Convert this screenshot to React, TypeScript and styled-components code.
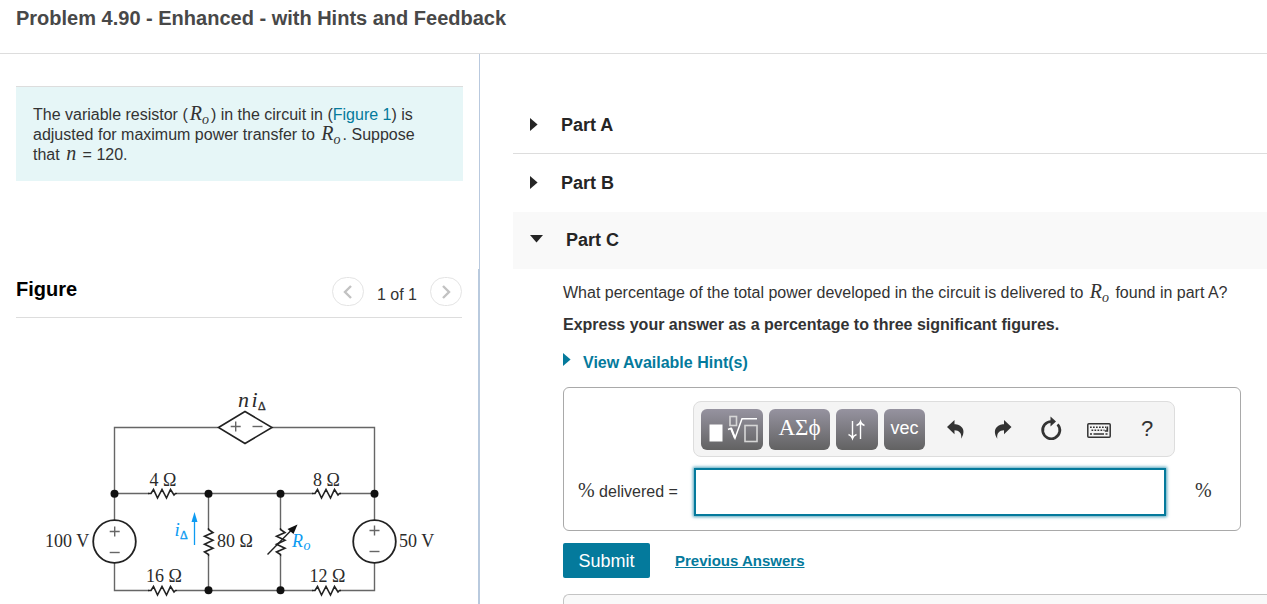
import React from "react";
import styled, { createGlobalStyle, css } from "styled-components";

const sans = `"Liberation Sans", Arial, sans-serif`;
const serif = `"Liberation Serif", "Times New Roman", serif`;
const teal = "#047a9c";

const GlobalStyle = createGlobalStyle`
  * { box-sizing: border-box; }
  body {
    margin: 0;
    background: #fff;
    color: #333;
    font: 16px/20px ${sans};
  }
  button, input { font: inherit; color: inherit; }
`;

const Page = styled.div`
  display: flex;
  flex-direction: column;
  height: 100vh;
  overflow: hidden;
`;

const Header = styled.header`
  flex: none;
  padding: 6px 16px 23px;
  border-bottom: 1px solid #ddd;
`;

const Title = styled.h1`
  margin: 0;
  font-size: 20px;
  line-height: 24px;
  color: #484848;
`;

const Columns = styled.div`
  display: flex;
  flex: 1;
  min-height: 0;
`;

const Sidebar = styled.aside`
  display: flex;
  flex-direction: column;
  flex: 0 0 480px;
`;

const IntroPane = styled.section`
  padding: 32px 16px 88px;
  border-right: 1px solid #b9c9de;
`;

const FigurePane = styled.section`
  flex: 1;
  min-height: 0;
  overflow: hidden;
  padding: 0 16px;
  border-right: 2px solid #b9cade;
`;

const Statement = styled.p`
  margin: 0;
  padding: 18px 32px 16px 17px;
  border-top: 1px solid #ddd;
  background: #e6f6f7;
`;

const Link = styled.a<{ $strong?: boolean }>`
  color: ${teal};
  text-decoration: none;
  ${({ $strong }) =>
    $strong &&
    css`
      font-size: 15px;
      font-weight: bold;
      text-decoration: underline;
    `}
`;

const Var = styled.i`
  margin: 0 2px;
  font-family: ${serif};
  font-size: 20px;
  line-height: 0;
`;

const Sub = styled.sub`
  font-size: 14px;
  line-height: 0;
  vertical-align: -4px;
`;

const Percent = styled.span`
  font-family: ${serif};
  font-size: 20px;
  line-height: 0;
`;

const FigureHeader = styled.div`
  display: flex;
  align-items: center;
  justify-content: space-between;
  height: 49px;
  padding-bottom: 3px;
  border-bottom: 1px solid #ddd;
`;

const FigureTitle = styled.h2`
  margin: 0 0 5px;
  font-size: 20px;
  line-height: 24px;
  color: #000;
`;

const Pager = styled.div`
  display: flex;
  align-items: center;
  gap: 13px;
`;

const PageCount = styled.span`
  padding-top: 6px;
`;

const PagerButton = styled.button`
  display: flex;
  align-items: center;
  justify-content: center;
  width: 32px;
  height: 29px;
  padding: 0;
  border: 1px solid #e4e4e4;
  border-radius: 15px;
  background: #fff;
`;

const Main = styled.main`
  flex: 1;
  min-width: 0;
  padding: 42px 0 0 33px;
`;

const PartRow = styled.button<{ $open?: boolean; $last?: boolean }>`
  display: flex;
  align-items: center;
  gap: 23px;
  width: 100%;
  height: ${({ $open }) => ($open ? 57 : 58)}px;
  padding: 0 17px ${({ $open, $last }) => ($open ? 2 : $last ? 1 : 0)}px;
  border: 0;
  border-bottom: ${({ $open, $last }) => ($open || $last ? "0" : "1px solid #ddd")};
  background: ${({ $open }) => ($open ? "#f9f9f9" : "#fff")};
  color: #252525;
  font-size: 18px;
  font-weight: bold;
  text-align: left;
`;

const PartBody = styled.div`
  padding: 14px 26px 0 50px;
`;

const Question = styled.p`
  margin: 0 0 12px;
`;

const Instruction = styled.p`
  margin: 0 0 18px;
  font-weight: bold;
`;

const HintToggle = styled.button`
  display: flex;
  gap: 12px;
  padding: 0;
  border: 0;
  background: none;
  color: ${teal};
  font-weight: bold;
`;

const AnswerBox = styled.div`
  display: grid;
  grid-template-columns: 115px minmax(0, 1fr) 51px;
  row-gap: 11px;
  align-items: center;
  margin: 14px 0 12px;
  padding: 13px 14px 14px;
  border: 1px solid #a9a9a9;
  border-radius: 6px;
`;

const Toolbar = styled.div`
  grid-column: 2;
  display: flex;
  align-items: center;
  gap: 6px;
  height: 56px;
  padding: 0 3px 0 7px;
  border: 1px solid #ddd;
  border-radius: 8px;
  background: #f4f4f4;
`;

const IconGroup = styled.div`
  display: flex;
`;

const MathButton = styled.button<{ $width: number; $serif?: boolean }>`
  display: flex;
  flex: none;
  align-items: center;
  justify-content: center;
  width: ${({ $width }) => $width}px;
  height: 41px;
  padding: 0 0 3px;
  border: 0;
  border-radius: 6px;
  background: linear-gradient(#9693a0, #626262);
  color: #fff;
  font-family: ${({ $serif }) => ($serif ? serif : sans)};
  font-size: ${({ $serif }) => ($serif ? 23 : 18)}px;
  svg { margin-bottom: -3px; }
`;

const IconButton = styled.button`
  display: flex;
  align-items: center;
  justify-content: center;
  width: 48px;
  height: 41px;
  padding: 0;
  border: 0;
  background: none;
  color: #333;
  font-size: 22px;
`;

const AnswerLabel = styled.label`
  grid-column: 1;
`;

const AnswerInput = styled.input`
  width: calc(100% - 10px);
  height: 48px;
  margin-left: 1px;
  padding: 0 8px;
  border: 2px solid ${teal};
  outline: 0;
  background: #fff;
  box-shadow: 0 0 3px 1px rgba(4, 122, 156, 0.7);
`;

const Unit = styled.span`
  padding-left: 20px;
`;

const Actions = styled.div`
  display: flex;
  align-items: center;
  gap: 25px;
  margin-bottom: 16px;
`;

const SubmitButton = styled.button`
  width: 87px;
  height: 35px;
  padding: 0;
  border: 0;
  border-radius: 2px;
  background: ${teal};
  color: #fff;
  font-size: 18px;
`;

const Feedback = styled.div`
  height: 96px;
  margin-right: -26px;
  border: 1px solid #c4c4c4;
  border-right: 0;
  border-radius: 6px 0 0 6px;
  background: #f9f9f9;
`;

const CircuitSvg = styled.svg`
  display: block;
  width: 446px;
  height: 286px;
  font-family: ${serif};
  font-size: 18px;
`;

const Ro = () => (
  <Var>
    R<Sub>o</Sub>
  </Var>
);

const Arrow = ({ down }: { down?: boolean }) =>
  down ? (
    <svg width="13" height="13" viewBox="0 0 13 13" aria-hidden="true">
      <path d="M0 2h13L6.5 9.6z" fill="currentColor" />
    </svg>
  ) : (
    <svg width="8" height="13" viewBox="0 0 8 13" aria-hidden="true">
      <path d="M0 0v13l7.6-6.5z" fill="currentColor" />
    </svg>
  );

const Chevron = ({ d }: { d: string }) => (
  <svg width="12" height="16" viewBox="0 0 12 16" fill="none" stroke="#c2c2c2" strokeWidth="2.4" aria-hidden="true">
    <path d={d} />
  </svg>
);

const zigzagH = (x: number, y: number) =>
  `M${x} ${y}h3l2.5-4 4 8.5 4.5-8.5 4.5 8.5 4-8.5 3.5 5.5 1.5-1.5h1.5`;
const zigzagV = (x: number, y: number) =>
  `M${x} ${y}v1.5l4.5 3-8.5 3.8 8.5 4-8.5 4 8.5 4-8.5 3.7 4 2.5v2`;

const Plus = ({ x, y }: { x: number; y: number }) => (
  <path d={`M${x - 5} ${y}h10M${x} ${y - 5}v10`} />
);
const Minus = ({ x, y }: { x: number; y: number }) => <path d={`M${x - 5} ${y}h10`} />;

const Circuit = () => (
  <CircuitSvg viewBox="16 318 446 286" role="img" aria-label="Circuit diagram">
    <g fill="none" stroke="#666" strokeWidth="1.4">
      <path d="M218 427.5H114.5V520M272 427.5H374.5V520" />
      <path d="M114.5 493.5H149M177 493.5H313M340 493.5H374.5" />
      <path d="M114.5 563V590.5H149M177 590.5H313M340 590.5H374.5V563" />
      <path d="M208.5 493.5V528M208.5 556.5V590.5M280.5 493.5V528M280.5 556.5V590.5" />
    </g>
    <g fill="none" stroke="#222" strokeWidth="1.6">
      <path d={zigzagH(148, 493.5)} />
      <path d={zigzagH(312, 493.5)} />
      <path d={zigzagH(148, 590.5)} />
      <path d={zigzagH(312, 590.5)} />
      <path d={zigzagV(208.5, 528)} />
      <path d={zigzagV(280.5, 528)} />
      <path d="M218.5 427.5L245 411.5l27 16-27 16z" />
      <circle cx="114.5" cy="541.5" r="21.3" strokeWidth="1.8" />
      <circle cx="374.5" cy="541.5" r="21.3" strokeWidth="1.8" />
      <path d="M267.5 554.5L291 530.5" strokeWidth="1.4" />
    </g>
    <path d="M297.500 524.500l-10 4.500 6 5z" fill="#111" />
    <g fill="#111">
      {[114.5, 208.5, 280.5, 374.5].map((x) => (
        <circle key={x} cx={x} cy="493.7" r="4" />
      ))}
      <circle cx="208.5" cy="590.3" r="4" />
      <circle cx="280.5" cy="590.3" r="4" />
    </g>
    <g stroke="#666" strokeWidth="1.4">
      <Plus x={235.7} y={426.5} />
      <Minus x={257.5} y={426.5} />
      <Plus x={114.7} y={531.5} />
      <Minus x={114.7} y={552.5} />
      <Plus x={374.5} y={530.5} />
      <Minus x={374.5} y={551.5} />
    </g>
    <g stroke="#0d9bf2" fill="#0d9bf2">
      <path d="M194.5 545V520" strokeWidth="1.3" />
      <path d="M194.5 512l3 10h-6z" stroke="none" />
    </g>
    <g fill="#2b2b2b">
      <text x="149.5" y="485.5">4 Ω</text>
      <text x="313" y="485.5">8 Ω</text>
      <text x="146" y="582">16 Ω</text>
      <text x="309.5" y="582">12 Ω</text>
      <text x="217" y="547">80 Ω</text>
      <text x="45" y="546.5">100 V</text>
      <text x="399" y="546.5">50 V</text>
      <text x="238" y="407" fontStyle="italic" fontSize="22">n</text>
      <text x="251.5" y="407" fontStyle="italic" fontSize="22">i</text>
      <text x="258" y="409.5" fontSize="12" stroke="#2b2b2b" strokeWidth="0.4">Δ</text>
    </g>
    <g fill="#0d9bf2">
      <text x="174.5" y="536" fontStyle="italic" fontSize="19">i</text>
      <text x="180" y="539" fontSize="12" stroke="#0d9bf2" strokeWidth="0.4">Δ</text>
      <text x="292" y="546.5" fontStyle="italic">R</text>
      <text x="303.5" y="550" fontStyle="italic" fontSize="14">o</text>
    </g>
  </CircuitSvg>
);

const TemplatesIcon = () => (
  <svg width="62" height="41" viewBox="0 0 62 41" fill="none" aria-hidden="true">
    <rect x="8.5" y="15.5" width="13" height="17" fill="#fff" />
    <rect x="29" y="7.500" width="6.500" height="9" stroke="#d6d6d6" strokeWidth="1.600" />
    <path d="M27 20.5l3-1.3 4 10L41 9.700h15" stroke="#fff" strokeWidth="1.500" />
    <path d="M30 19.200l4 10" stroke="#fff" strokeWidth="2.200" />
    <rect x="44" y="16.5" width="12" height="16" stroke="#d6d6d6" strokeWidth="1.600" />
  </svg>
);

const UpDownIcon = () => (
  <svg width="42" height="41" viewBox="0 0 42 41" fill="none" stroke="#fff" strokeWidth="1.4" aria-hidden="true">
    <path d="M16.5 12v17.500M12.500 25.500q3 1 4 4 1-3 4-4M24.500 30V12.500M20.500 16.500q3-1 4-4 1 3 4 4" />
  </svg>
);

const replyPath = "M4 10l7.500-7v4.200C18 7.500 24 12 18.200 21.800C19 16 16 13.500 11.500 13.300v4z";

const UndoIcon = () => (
  <svg width="24" height="24" viewBox="0 0 24 24" fill="currentColor" aria-hidden="true">
    <path d={replyPath} />
  </svg>
);

const RedoIcon = () => (
  <svg width="24" height="24" viewBox="0 0 24 24" fill="currentColor" aria-hidden="true">
    <path d={replyPath} transform="matrix(-1 0 0 1 24.5 0)" />
  </svg>
);

const ResetIcon = () => (
  <svg width="24" height="26" viewBox="0 0 24 26" aria-hidden="true">
    <path d="M12.5 5.500A8.600 8.600 0 1 0 18.600 8.300" fill="none" stroke="currentColor" strokeWidth="2.700" />
    <path d="M11.500 0.500l5.500 5-5.500 5z" fill="currentColor" />
  </svg>
);

const KeyboardIcon = () => (
  <svg width="24" height="20" viewBox="0 0 24 20" fill="none" stroke="currentColor" aria-hidden="true">
    <rect x="0.8" y="4.8" width="22.4" height="13.4" rx="1" strokeWidth="1.5" />
    <path d="M3 8.300h16M4.500 11.300h13" strokeWidth="1.6" strokeDasharray="1.700 1.300" />
    <path d="M20.300 7.500v4.500h-2.500" strokeWidth="1.7" />
    <path d="M3 15h2M6.500 15h10.500M18.500 15h2" strokeWidth="1.5" />
  </svg>
);

export default function App() {
  return (
    <Page>
      <GlobalStyle />
      <Header>
        <Title>Problem 4.90 - Enhanced - with Hints and Feedback</Title>
      </Header>
      <Columns>
        <Sidebar>
          <IntroPane>
            <Statement>
              The variable resistor (<Ro />) in the circuit in (<Link href="#figure">Figure 1</Link>) is
              adjusted for maximum power transfer to <Ro />. Suppose that <Var>n</Var> = 120.
            </Statement>
          </IntroPane>
          <FigurePane id="figure">
            <FigureHeader>
              <FigureTitle>Figure</FigureTitle>
              <Pager>
                <PagerButton aria-label="Previous figure">
                  <Chevron d="M9 2L3 8l6 6" />
                </PagerButton>
                <PageCount>1 of 1</PageCount>
                <PagerButton aria-label="Next figure">
                  <Chevron d="M3 2l6 6-6 6" />
                </PagerButton>
              </Pager>
            </FigureHeader>
            <Circuit />
          </FigurePane>
        </Sidebar>
        <Main>
          <PartRow aria-expanded="false">
            <Arrow />
            Part A
          </PartRow>
          <PartRow aria-expanded="false" $last>
            <Arrow />
            Part B
          </PartRow>
          <PartRow aria-expanded="true" $open>
            <Arrow down />
            Part C
          </PartRow>
          <PartBody>
            <Question>
              What percentage of the total power developed in the circuit is delivered to <Ro /> found in part A?
            </Question>
            <Instruction>Express your answer as a percentage to three significant figures.</Instruction>
            <HintToggle aria-expanded="false">
              <Arrow />
              View Available Hint(s)
            </HintToggle>
            <AnswerBox>
              <Toolbar role="toolbar" aria-label="Equation editor">
                <MathButton $width={62} aria-label="Templates">
                  <TemplatesIcon />
                </MathButton>
                <MathButton $width={61} $serif>
                  ΑΣϕ
                </MathButton>
                <MathButton $width={42} aria-label="Subscript and superscript">
                  <UpDownIcon />
                </MathButton>
                <MathButton $width={41}>vec</MathButton>
                <IconGroup>
                  <IconButton aria-label="Undo">
                    <UndoIcon />
                  </IconButton>
                  <IconButton aria-label="Redo">
                    <RedoIcon />
                  </IconButton>
                  <IconButton aria-label="Reset">
                    <ResetIcon />
                  </IconButton>
                  <IconButton aria-label="Keyboard shortcuts">
                    <KeyboardIcon />
                  </IconButton>
                  <IconButton aria-label="Help">?</IconButton>
                </IconGroup>
              </Toolbar>
              <AnswerLabel htmlFor="answer">
                <Percent>%</Percent> delivered =
              </AnswerLabel>
              <AnswerInput id="answer" type="text" />
              <Unit>
                <Percent>%</Percent>
              </Unit>
            </AnswerBox>
            <Actions>
              <SubmitButton>Submit</SubmitButton>
              <Link href="#answers" $strong>
                Previous Answers
              </Link>
            </Actions>
            <Feedback />
          </PartBody>
        </Main>
      </Columns>
    </Page>
  );
}
